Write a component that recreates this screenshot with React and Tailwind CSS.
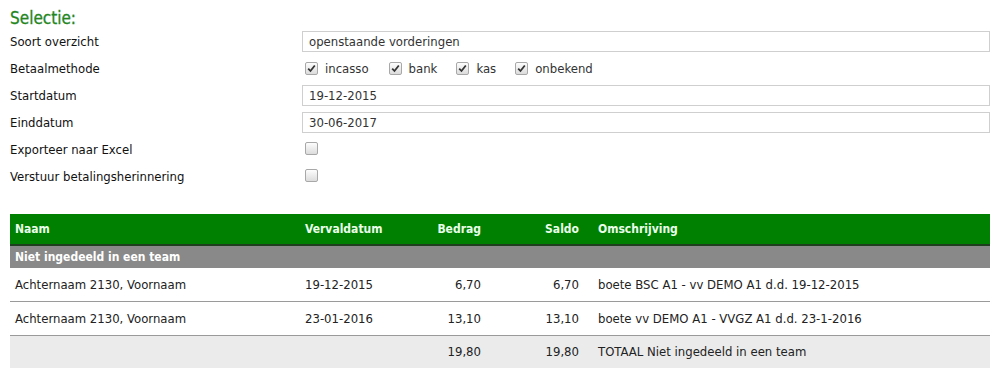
import React from "react";

const font = { fontFamily: '"DejaVu Sans Condensed", "Liberation Sans", sans-serif' };

function Check({ checked }) {
  return (
    <span className="inline-flex h-[13px] w-[13px] items-center justify-center rounded-[2px] border border-[#a8a8a8] bg-gradient-to-b from-[#fdfdfd] to-[#dcdcdc]">
      {checked && (
        <svg width="9" height="9" viewBox="0 0 9 9">
          <path d="M1.2 4.6 L3.5 7 L7.8 1.5" stroke="#333" strokeWidth="1.8" fill="none" />
        </svg>
      )}
    </span>
  );
}

function Row({ label, children }) {
  return (
    <div className="flex h-[27px] items-center">
      <div className="w-[292px] shrink-0 text-[13px] text-[#111]">{label}</div>
      <div className="flex flex-1 items-center">{children}</div>
    </div>
  );
}

function Input({ value }) {
  return (
    <div className="flex h-[21px] w-[688px] items-center border border-[#cfcfcf] px-[6px] text-[13px] text-[#333]">
      {value}
    </div>
  );
}

export default function App() {
  return (
    <div className="w-[1000px] h-[380px] bg-white pl-[10px] pr-[10px] pt-[8px]" style={font}>
      <div className="text-[17px] leading-[20px] text-[#23861e] [-webkit-text-stroke:0.3px_#23861e]">Selectie:</div>
      <div>
        <Row label="Soort overzicht">
          <Input value="openstaande vorderingen" />
        </Row>
        <Row label="Betaalmethode">
          <div className="flex items-center pl-[3px] text-[13px] text-[#333]">
            <Check checked />
            <span className="ml-[7px] mr-[20px]">incasso</span>
            <Check checked />
            <span className="ml-[7px] mr-[19px]">bank</span>
            <Check checked />
            <span className="ml-[7px] mr-[19px]">kas</span>
            <Check checked />
            <span className="ml-[7px]">onbekend</span>
          </div>
        </Row>
        <Row label="Startdatum">
          <Input value="19-12-2015" />
        </Row>
        <Row label="Einddatum">
          <Input value="30-06-2017" />
        </Row>
        <Row label="Exporteer naar Excel">
          <div className="pl-[3px]"><Check /></div>
        </Row>
        <Row label="Verstuur betalingsherinnering">
          <div className="pl-[3px]"><Check /></div>
        </Row>
      </div>

      <div className="mt-[24px] w-[980px] text-[13px]">
        <div className="flex h-[32px] items-center border-b-[2px] border-[#1f3d1f] bg-[#008000] text-[12px] font-bold text-[#eaffea]">
          <div className="w-[290px] pl-[5px]">Naam</div>
          <div className="w-[110px] pl-[5px]">Vervaldatum</div>
          <div className="w-[71px] text-right">Bedrag</div>
          <div className="w-[98px] text-right">Saldo</div>
          <div className="flex-1 pl-[19px]">Omschrijving</div>
        </div>
        <div className="flex h-[22px] items-center bg-[#898989] pl-[5px] text-[12px] font-bold text-white">
          Niet ingedeeld in een team
        </div>
        {[
          ["Achternaam 2130, Voornaam", "19-12-2015", "6,70", "6,70", "boete BSC A1 - vv DEMO A1 d.d. 19-12-2015"],
          ["Achternaam 2130, Voornaam", "23-01-2016", "13,10", "13,10", "boete vv DEMO A1 - VVGZ A1 d.d. 23-1-2016"],
        ].map((r, i) => (
          <div key={i} className="flex h-[34px] items-center border-b border-[#9a9a9a] text-[#222]">
            <div className="w-[290px] pl-[5px]">{r[0]}</div>
            <div className="w-[110px] pl-[5px]">{r[1]}</div>
            <div className="w-[71px] text-right">{r[2]}</div>
            <div className="w-[98px] text-right">{r[3]}</div>
            <div className="flex-1 pl-[19px]">{r[4]}</div>
          </div>
        ))}
        <div className="flex h-[32px] items-center bg-[#ebebeb] text-[#222]">
          <div className="w-[290px] pl-[5px]"></div>
          <div className="w-[110px] pl-[5px]"></div>
          <div className="w-[71px] text-right">19,80</div>
          <div className="w-[98px] text-right">19,80</div>
          <div className="flex-1 pl-[19px]">TOTAAL Niet ingedeeld in een team</div>
        </div>
      </div>
    </div>
  );
}
